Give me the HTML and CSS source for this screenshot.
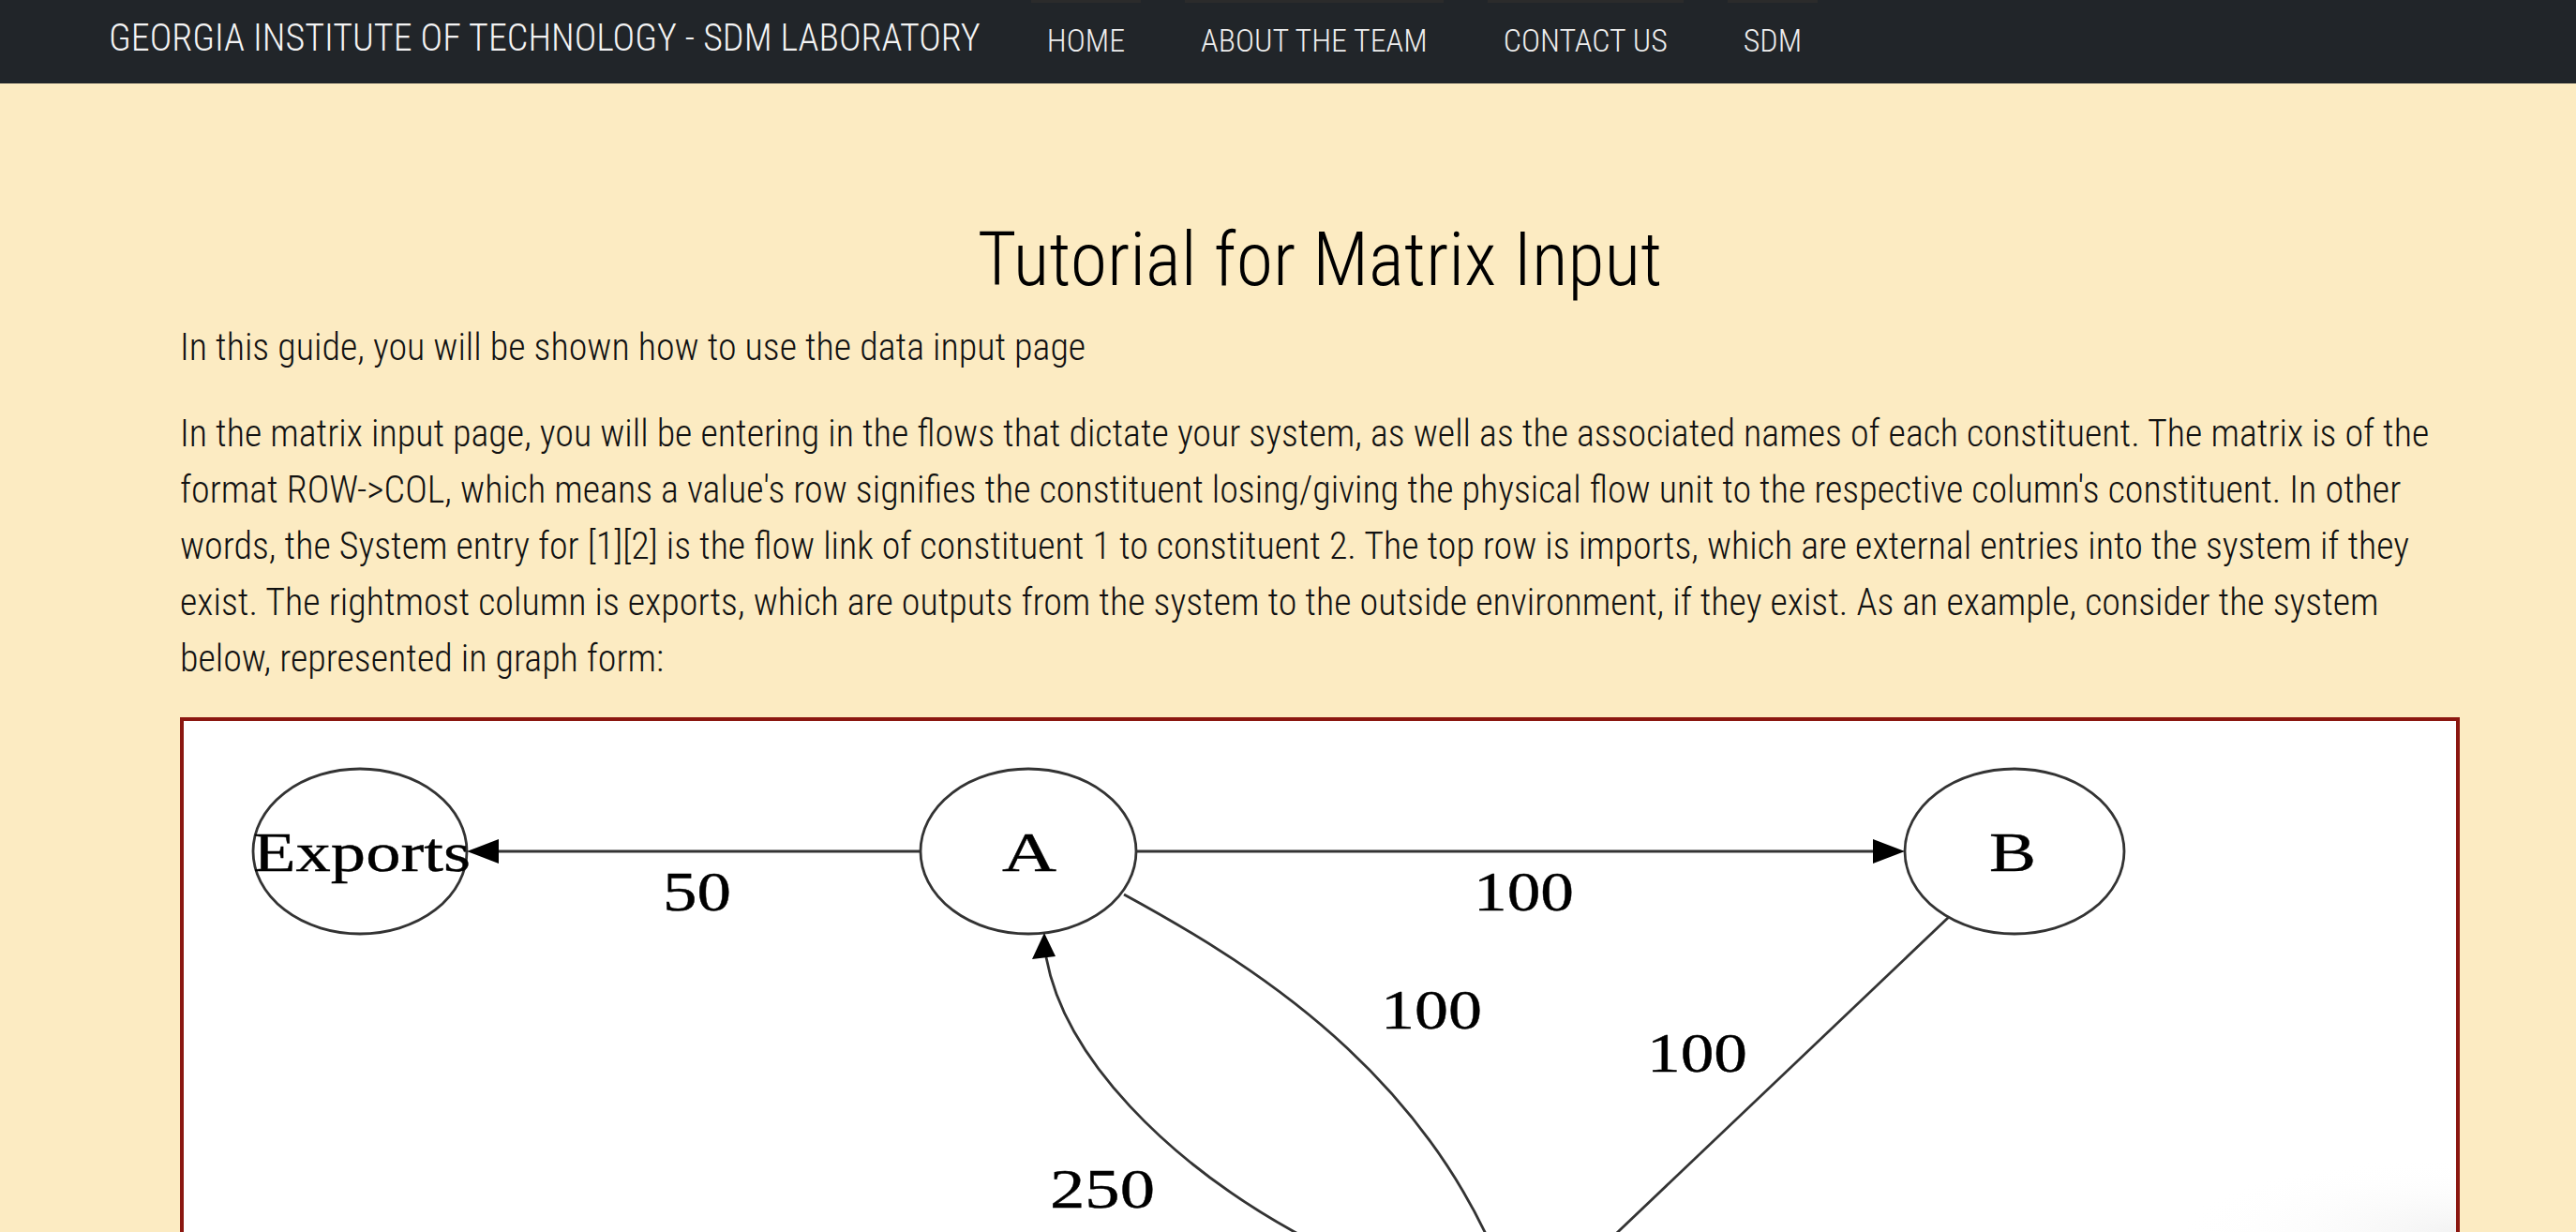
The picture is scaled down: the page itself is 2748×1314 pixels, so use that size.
FILE: index.html
```html
<!DOCTYPE html>
<html lang="en">
<head>
<meta charset="utf-8">
<title>Tutorial for Matrix Input</title>
<link rel="stylesheet" href="styles.css">
</head>
<body>
<nav class="navbar">
  <a class="brand" href="#">GEORGIA INSTITUTE OF TECHNOLOGY - SDM LABORATORY</a>
  <ul class="nav-list">
    <li class="nav-item"><a href="#">HOME</a></li>
    <li class="nav-item"><a href="#">ABOUT THE TEAM</a></li>
    <li class="nav-item"><a href="#">CONTACT US</a></li>
    <li class="nav-item"><a href="#">SDM</a></li>
  </ul>
</nav>
<main class="content">
  <h1 class="title">Tutorial for Matrix Input</h1>
  <p class="lead">In this guide, you will be shown how to use the data input page</p>
  <p class="body-text">In the matrix input page, you will be entering in the flows that dictate your system, as well as the associated names of each constituent. The matrix is of the format ROW-&gt;COL, which means a value's row signifies the constituent losing/giving the physical flow unit to the respective column's constituent. In other words, the System entry for [1][2] is the flow link of constituent 1 to constituent 2. The top row is imports, which are external entries into the system if they exist. The rightmost column is exports, which are outputs from the system to the outside environment, if they exist. As an example, consider the system below, represented in graph form:</p>
  <figure class="graph-frame">
    <svg class="graph" viewBox="0 0 2424 545" width="2424" height="545" xmlns="http://www.w3.org/2000/svg">
      <defs>
        <radialGradient id="corner-shade" cx="1" cy="1" r="1">
          <stop offset="0" stop-color="#f3f3f3"/>
          <stop offset="1" stop-color="#ffffff" stop-opacity="0"/>
        </radialGradient>
      </defs>
      <rect x="2124" y="465" width="300" height="80" fill="url(#corner-shade)"/>
      <g fill="none" stroke="#333" stroke-width="2.8">
        <ellipse cx="188" cy="139" rx="114" ry="88"/>
        <ellipse cx="901" cy="139" rx="115" ry="88"/>
        <ellipse cx="1953" cy="139" rx="117" ry="88"/>
        <line x1="786" y1="139" x2="330" y2="139"/>
        <line x1="1016" y1="139" x2="1808" y2="139"/>
        <path d="M 920 252 C 940 360, 1050 470, 1185 545 S 1310 610, 1340 640"/>
        <path d="M 1003 185 C 1150 265, 1350 390, 1425 640"/>
        <line x1="1883" y1="209" x2="1430" y2="640"/>
      </g>
      <g fill="#000">
        <polygon points="302,139 336,126 336,152"/>
        <polygon points="1836,139 1802,126 1802,152"/>
        <polygon points="918,226 905,254 930,251"/>
      </g>
      <g class="graph-text" font-family="'Liberation Serif', 'Times New Roman', serif" font-size="60" fill="#000" stroke="#000" stroke-width="0.4">
        <text x="74" y="160" textLength="232" lengthAdjust="spacingAndGlyphs">Exports</text>
        <text x="873" y="160" textLength="58" lengthAdjust="spacingAndGlyphs">A</text>
        <text x="1926" y="160" textLength="50" lengthAdjust="spacingAndGlyphs">B</text>
        <text x="511" y="202" textLength="73" lengthAdjust="spacingAndGlyphs">50</text>
        <text x="1376" y="202" textLength="107" lengthAdjust="spacingAndGlyphs">100</text>
        <text x="1277" y="328" textLength="108" lengthAdjust="spacingAndGlyphs">100</text>
        <text x="1561" y="374" textLength="107" lengthAdjust="spacingAndGlyphs">100</text>
        <text x="924" y="519" textLength="112" lengthAdjust="spacingAndGlyphs">250</text>
      </g>
    </svg>
  </figure>
</main>
</body>
</html>
```
FILE: styles.css
```css
html, body {
  margin: 0;
  padding: 0;
}

body {
  background: #fcebc2;
  color: #111;
  font-family: "Roboto", "Liberation Sans", sans-serif;
  font-stretch: 75%;
  font-weight: 300;
  overflow: hidden;
  height: 1314px;
}

.navbar {
  height: 89px;
  background: #212529;
  display: flex;
  align-items: center;
  padding-left: 116px;
}

.brand {
  color: #f4f4f4;
  text-decoration: none;
  font-size: 40px;
  line-height: 48px;
  margin-top: -8px;
  white-space: nowrap;
}

.nav-list {
  list-style: none;
  margin: 0 0 0 54px;
  padding: 0;
  display: flex;
  align-self: stretch;
  gap: 47px;
}

.nav-item {
  display: flex;
  align-items: center;
  padding: 0 17px 6px;
  border-top: 3px solid #2b2b2b;
  box-sizing: border-box;
}

.nav-item a {
  color: #eeeeee;
  text-decoration: none;
  font-size: 34px;
  line-height: 40px;
  white-space: nowrap;
}

.content {
  padding: 0 124px 0 192px;
}

.title {
  margin: 140px 0 0;
  text-align: center;
  font-size: 80px;
  line-height: 96px;
  font-weight: 300;
  color: #000;
}

.lead {
  margin: 16px 0 0;
  font-size: 40px;
  line-height: 60px;
}

.body-text {
  margin: 32px 0 0;
  font-size: 40px;
  line-height: 60px;
}

.graph-frame {
  margin: 32px 0 0;
  border: 4px solid #8b1710;
  border-bottom: 0;
  background: #ffffff;
  height: 545px;
  overflow: hidden;
}

.graph {
  display: block;
}
```
